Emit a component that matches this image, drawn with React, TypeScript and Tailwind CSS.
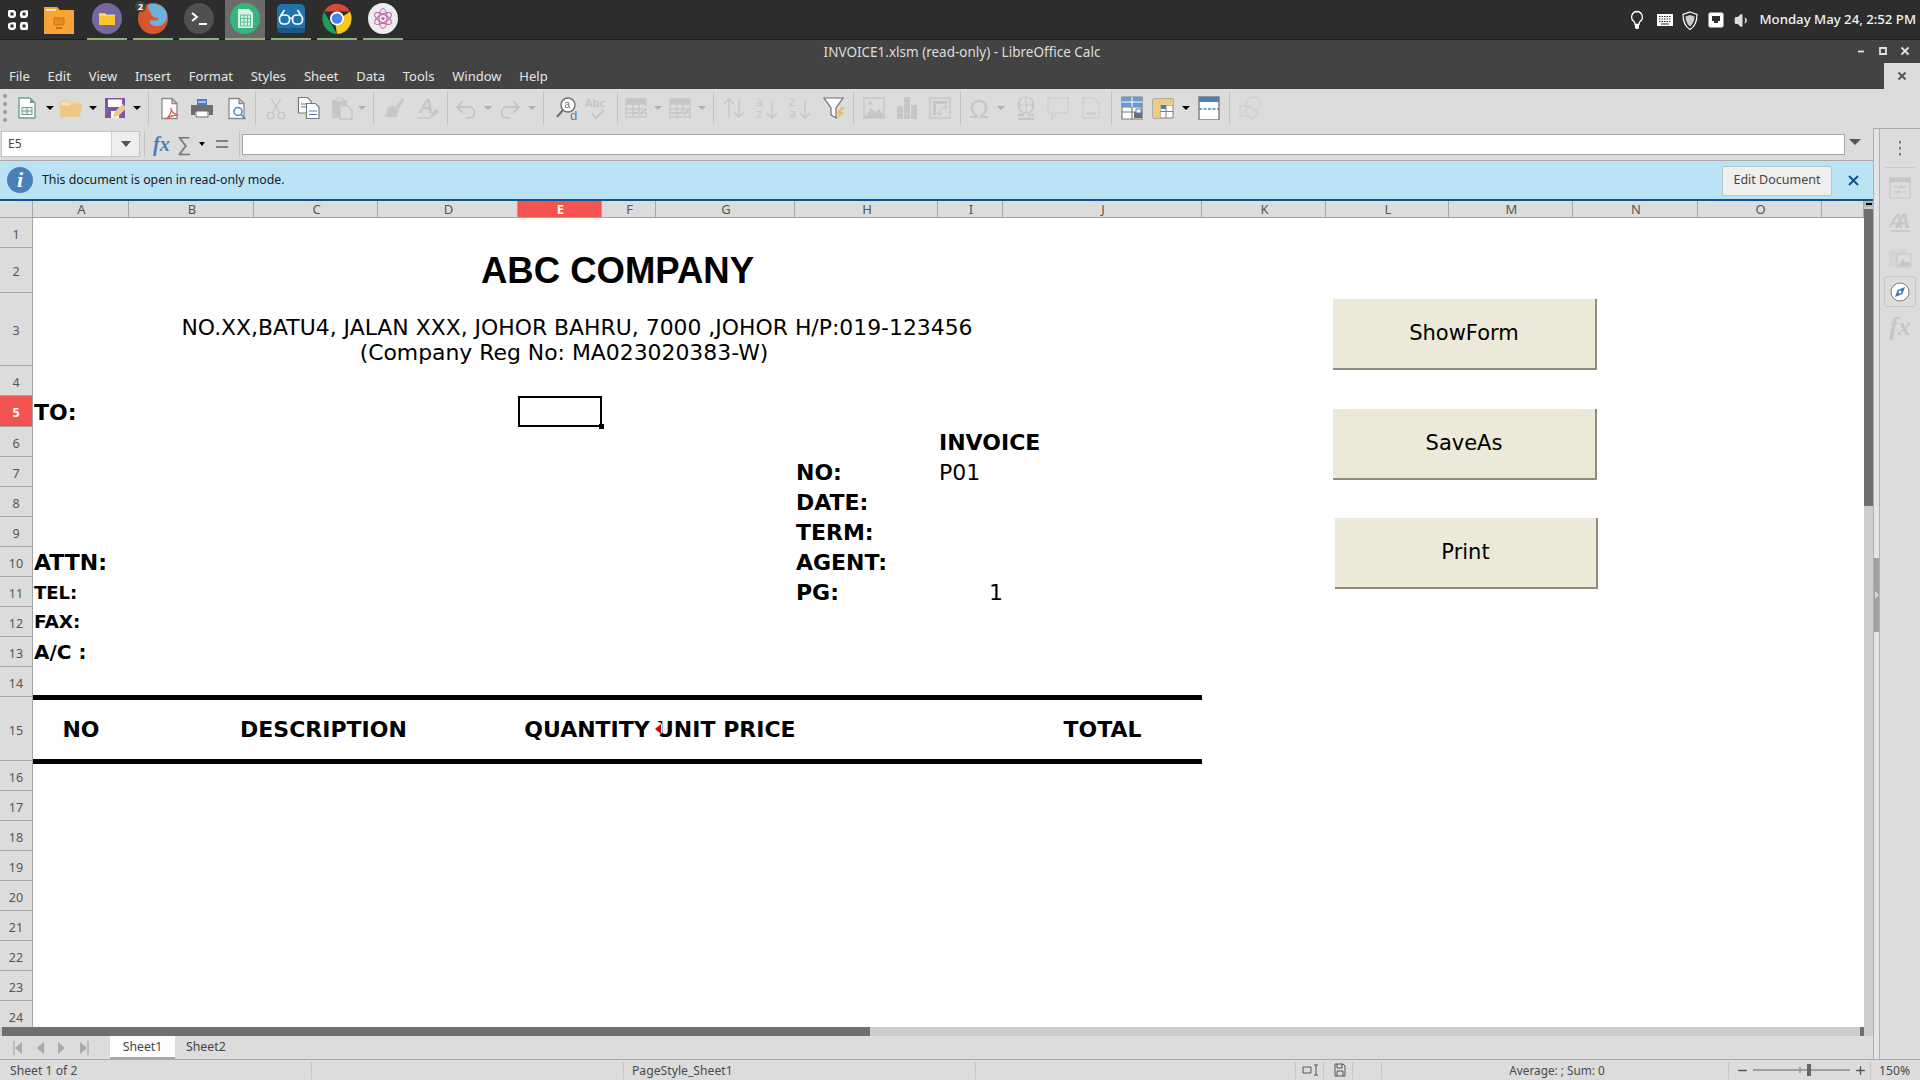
import type { ReactNode } from "react";
import { Minus, Plus, Volume1 } from "lucide-react";

const UI = "font-['Noto_Sans',sans-serif]";
const OFF = "#c6c6c6";

const columns = [
  ["A", 96], ["B", 125], ["C", 124], ["D", 140], ["E", 84], ["F", 54], ["G", 139], ["H", 143],
  ["I", 65], ["J", 199], ["K", 124], ["L", 123], ["M", 124], ["N", 125], ["O", 124], ["", 42],
] as const;

function Svg({ children, w = 24, h = 24 }: { children: ReactNode; w?: number; h?: number }) {
  return (
    <svg width={w} height={h} viewBox={`0 0 ${w} ${h}`} fill="none" className="block">
      {children}
    </svg>
  );
}

const Doc = ({ c = "#7f7f7f", f = "#fff" }: { c?: string; f?: string }) => (
  <path d="M5 2.5h10l5 5v15H5z M15 2.5v5h5" stroke={c} strokeWidth="1.3" fill={f} />
);

const GridIcon = ({ c = OFF }: { c?: string }) => (
  <>
    <path d="M2 3h20v18H2z M2 8h20 M2 13h20 M2 17h20 M9 3v18 M15 3v18" stroke={c} strokeWidth="1.3" />
    <path d="M2 3h20v5H2z" fill={c} />
    <path d="M14 21l2-5 6-5 2 2-6 6z" fill={c} stroke="#dcdcdc" />
  </>
);

const tools: { x: number; kind: "icon" | "arrow" | "off" | "sep"; icon?: ReactNode }[] = [
  {
    x: 27, kind: "icon",
    icon: (
      <Svg>
        <path d="M4 2h11l5 5v15H4z" stroke="#6fa08c" strokeWidth="1.4" fill="#fff" />
        <path d="M15 2l5 5h-5z" fill="#6fa08c" />
        <path d="M6.5 11h11v8h-11z" fill="#6fa08c" />
        <path d="M7.5 14.4h4v-2.4h-4z M12.5 14.4h4v-2.4h-4z M7.5 18h4v-2.6h-4z M12.5 18h4v-2.6h-4z" fill="#e8f2ee" />
      </Svg>
    ),
  },
  { x: 50, kind: "arrow" },
  {
    x: 71, kind: "icon",
    icon: (
      <Svg>
        <path d="M1 8l1-3h8l2 2h8v3H1z" fill="#f7dfb0" stroke="#e6c07e" strokeWidth=".8" />
        <path d="M1 21V10h9l2-2h11l-2 13z" fill="#eec784" />
      </Svg>
    ),
  },
  { x: 93, kind: "arrow" },
  {
    x: 115, kind: "icon",
    icon: (
      <Svg>
        <path d="M2 2h20v20H2z" fill="#7e57a7" />
        <path d="M5 3.5h14v7.5H5z" fill="#fff" />
        <path d="M8 15h8v7H8z" fill="#fff" />
        <path d="M10 21.5l1.5-5 8-8 3.5 3.5-8 8z" fill="#f0c77e" stroke="#dcdcdc" strokeWidth=".7" />
      </Svg>
    ),
  },
  { x: 137, kind: "arrow" },
  { x: 148, kind: "sep" },
  {
    x: 169, kind: "icon",
    icon: (
      <Svg>
        <Doc c="#8a8a8a" />
        <path d="M9 23c4-3 6-8 5-11 0 4 3 6 7 7-4 0-8 1-12 4z" stroke="#e0604a" strokeWidth="1.3" fill="#fff" />
      </Svg>
    ),
  },
  {
    x: 202, kind: "icon",
    icon: (
      <Svg>
        <path d="M7 3h10v6H7z" fill="#4a7fb8" />
        <path d="M1 9h22v10h-4v-3H5v3H1z" fill="#6e6e6e" />
        <path d="M6 15h12v6H6z" fill="#fff" stroke="#6e6e6e" />
        <path d="M8 6h8" stroke="#fff" />
      </Svg>
    ),
  },
  {
    x: 236, kind: "icon",
    icon: (
      <Svg>
        <Doc c="#8a8a8a" />
        <circle cx="14" cy="15.5" r="4" stroke="#4a86c0" strokeWidth="1.5" fill="#fff" />
        <path d="M17 18.5l4.5 4.5" stroke="#4a86c0" strokeWidth="1.6" />
      </Svg>
    ),
  },
  { x: 255, kind: "sep" },
  {
    x: 276, kind: "icon",
    icon: (
      <Svg>
        <path d="M7 2l8.5 15M17 2L8.5 17" stroke={OFF} strokeWidth="1.4" />
        <circle cx="6.5" cy="19.5" r="3.2" stroke={OFF} strokeWidth="1.4" />
        <circle cx="17.5" cy="19.5" r="3.2" stroke={OFF} strokeWidth="1.4" />
      </Svg>
    ),
  },
  {
    x: 309, kind: "icon",
    icon: (
      <Svg>
        <path d="M1.5 1.5h9l3.5 3.5v12H1.5z" stroke="#7a7a7a" strokeWidth="1.2" fill="#fff" />
        <path d="M4 8h7M4 11h7" stroke="#4a7fb8" strokeWidth="1.2" />
        <path d="M9.5 7.5h9l3.5 3.5v11.5H9.5z" stroke="#7a7a7a" strokeWidth="1.2" fill="#fff" />
        <path d="M12 15h8M12 18.5h8" stroke="#4a7fb8" strokeWidth="1.2" />
      </Svg>
    ),
  },
  {
    x: 342, kind: "icon",
    icon: (
      <Svg>
        <path d="M2 4h15v18H2z" fill={OFF} />
        <path d="M6 2h7v4H6z" fill="#dcdcdc" stroke={OFF} />
        <path d="M10 10h8l4 4v9H10z" fill="#dcdcdc" stroke={OFF} strokeWidth="1.3" />
      </Svg>
    ),
  },
  { x: 362, kind: "off" },
  { x: 373, kind: "sep" },
  {
    x: 394, kind: "icon",
    icon: (
      <Svg>
        <path d="M14 11L20 2l2 1.5-5 9.5z" fill={OFF} />
        <path d="M5 12l6-3 6 5-3 7H3l2-4z" fill={OFF} />
      </Svg>
    ),
  },
  {
    x: 428, kind: "icon",
    icon: (
      <Svg>
        <text x="3" y="17" fontSize="20" fontStyle="italic" fontWeight="700" fontFamily="Liberation Sans" fill={OFF}>A</text>
        <path d="M1 22h14" stroke={OFF} strokeWidth="1.5" />
        <path d="M14 21l1-3 5-5 2.5 2.500-5 5z" fill={OFF} />
      </Svg>
    ),
  },
  { x: 447, kind: "sep" },
  {
    x: 466, kind: "icon",
    icon: (
      <Svg>
        <path d="M9 5l-6 6 6 6M3 11h12a5.5 5.5 0 0 1 0 11h-3" stroke={OFF} strokeWidth="1.8" />
      </Svg>
    ),
  },
  { x: 488, kind: "off" },
  {
    x: 510, kind: "icon",
    icon: (
      <Svg>
        <path d="M15 5l6 6-6 6M21 11H9a5.5 5.5 0 0 0 0 11h3" stroke={OFF} strokeWidth="1.8" />
      </Svg>
    ),
  },
  { x: 532, kind: "off" },
  { x: 543, kind: "sep" },
  {
    x: 567, kind: "icon",
    icon: (
      <Svg>
        <circle cx="13" cy="9" r="7" stroke="#6e6e6e" strokeWidth="1.4" fill="#fff" />
        <path d="M8 14l-6 7" stroke="#6e6e6e" strokeWidth="2" />
        <text x="9.500" y="12" fontSize="10" fontFamily="Liberation Sans" fill="#6e6e6e">a</text>
        <text x="15" y="24" fontSize="13" fontFamily="Liberation Sans" fill="#4a86c0">d</text>
      </Svg>
    ),
  },
  {
    x: 597, kind: "icon",
    icon: (
      <Svg>
        <text x="0" y="11" fontSize="11" fontWeight="700" fontFamily="Noto Sans" fill={OFF}>Abc</text>
        <path d="M7 17l4 5 8-8" stroke={OFF} strokeWidth="2" />
      </Svg>
    ),
  },
  { x: 617, kind: "sep" },
  { x: 636, kind: "icon", icon: <Svg><GridIcon /></Svg> },
  { x: 658, kind: "off" },
  { x: 680, kind: "icon", icon: <Svg><GridIcon /></Svg> },
  { x: 702, kind: "off" },
  { x: 713, kind: "sep" },
  {
    x: 734, kind: "icon",
    icon: (
      <Svg>
        <path d="M7 22V3M2 8l5-5 5 5M17 2v19M12 16l5 5 5-5" stroke={OFF} strokeWidth="1.3" />
      </Svg>
    ),
  },
  {
    x: 767, kind: "icon",
    icon: (
      <Svg>
        <text x="1" y="10" fontSize="13" fontFamily="Noto Sans" fill={OFF}>a</text>
        <text x="1" y="22" fontSize="13" fontFamily="Noto Sans" fill={OFF}>z</text>
        <path d="M17 5v17M12 17l5 5 5-5" stroke={OFF} strokeWidth="1.3" />
      </Svg>
    ),
  },
  {
    x: 800, kind: "icon",
    icon: (
      <Svg>
        <text x="1" y="10" fontSize="13" fontFamily="Noto Sans" fill={OFF}>z</text>
        <text x="1" y="22" fontSize="13" fontFamily="Noto Sans" fill={OFF}>a</text>
        <path d="M17 5v17M12 17l5 5 5-5" stroke={OFF} strokeWidth="1.3" />
      </Svg>
    ),
  },
  {
    x: 834, kind: "icon",
    icon: (
      <Svg>
        <path d="M2 2h19l-7 10v10l-5-3v-7z" fill="#fff" stroke="#6e6e6e" strokeWidth="1.2" />
        <path d="M19 11h4l-4 5h3l-7 8 2-6h-3z" fill="#f0bd62" />
      </Svg>
    ),
  },
  { x: 853, kind: "sep" },
  {
    x: 874, kind: "icon",
    icon: (
      <Svg>
        <path d="M2 2h20v20H2z" stroke={OFF} strokeWidth="1.4" />
        <path d="M2 22l7-10 4 5 4-4 5 6v3z" fill={OFF} />
        <circle cx="8" cy="7" r="2" fill={OFF} />
      </Svg>
    ),
  },
  {
    x: 906, kind: "icon",
    icon: (
      <Svg>
        <path d="M3 10h6v13H3z M10 1h6v22h-6z M17 9h6v14h-6z" fill={OFF} />
      </Svg>
    ),
  },
  {
    x: 940, kind: "icon",
    icon: (
      <Svg>
        <path d="M2 2h20v20H2z" stroke={OFF} strokeWidth="1.4" />
        <path d="M5 5h14v3H5z M5 5h3v14H5z" fill={OFF} />
        <path d="M11 19c0-5 3-8 8-8M16 9l3 2-2 3M9 16l2 3 3-2" stroke={OFF} strokeWidth="1.1" />
      </Svg>
    ),
  },
  { x: 960, kind: "sep" },
  {
    x: 979, kind: "icon",
    icon: (
      <Svg>
        <text x="12" y="22" textAnchor="middle" fontSize="26" fontFamily="Liberation Sans" fill={OFF}>Ω</text>
      </Svg>
    ),
  },
  { x: 1001, kind: "off" },
  {
    x: 1026, kind: "icon",
    icon: (
      <Svg>
        <circle cx="12" cy="9" r="8" stroke={OFF} strokeWidth="1.2" />
        <path d="M4 9h16 M12 1v16 M7 2c-2 4-2 10 0 14 M17 2c2 4 2 10 0 14" stroke={OFF} />
        <path d="M4 19h6M14 19h6M4 23h16" stroke={OFF} strokeWidth="2.5" />
      </Svg>
    ),
  },
  {
    x: 1058, kind: "icon",
    icon: (
      <Svg>
        <path d="M2 2h20v15H10l-4 6v-6H2z" stroke="#cfcfcf" strokeWidth="1.5" />
      </Svg>
    ),
  },
  {
    x: 1091, kind: "icon",
    icon: (
      <Svg>
        <path d="M4 2h11l5 5v15H4z" stroke="#cfcfcf" strokeWidth="1.4" />
        <path d="M7 16h10v3H7z" fill="#cfcfcf" />
      </Svg>
    ),
  },
  { x: 1111, kind: "sep" },
  {
    x: 1132, kind: "icon",
    icon: (
      <Svg>
        <path d="M2 1h20v22H2z M2 11h20 M2 16h20 M12 1v22" stroke="#7a7a7a" strokeWidth="1.2" fill="#fff" />
        <path d="M2 1h20v10H2z" fill="#6d9bcc" />
        <path d="M2 6h20M12 1v10" stroke="#fff" />
        <path d="M14 16h8v6h-8z" fill="#6e6e6e" />
        <path d="M16 13h5v4h-5z" fill="#fff" stroke="#4a7fb8" />
      </Svg>
    ),
  },
  {
    x: 1163, kind: "icon",
    icon: (
      <Svg>
        <path d="M2 3h20v19H2z M2 9h20 M2 15.5h20 M9 3v19 M15 3v19" stroke="#7f7f7f" strokeWidth="1" fill="#fff" />
        <path d="M2 3h7v19H2z M9 3h13v6H9z" fill="#efc986" />
        <path d="M10 9h5v4h-5z" fill="#4a7fb8" />
      </Svg>
    ),
  },
  { x: 1186, kind: "arrow" },
  {
    x: 1209, kind: "icon",
    icon: (
      <Svg>
        <path d="M2 1h20v23H2z" stroke="#7a7a7a" strokeWidth="1.4" fill="#fff" />
        <path d="M2 1h20v5H2z" fill="#4a7fb8" />
        <path d="M2 13h20" stroke="#4a86c0" strokeWidth="1.3" strokeDasharray="3 1.5" />
      </Svg>
    ),
  },
  { x: 1229, kind: "sep" },
  {
    x: 1250, kind: "icon",
    icon: (
      <Svg>
        <circle cx="15" cy="8" r="7" stroke="#cfcfcf" strokeWidth="1.3" />
        <path d="M2 10h9v10H2z" stroke="#cfcfcf" strokeWidth="1.3" />
        <path d="M12 10l8 7-6 6-7-7z" fill="#dcdcdc" stroke="#cfcfcf" strokeWidth="1.3" />
      </Svg>
    ),
  },
];

function Toolbar() {
  let end = 0;
  return (
    <div className="h-[39px] bg-[#dcdcdc] flex items-center pb-[1px] shrink-0">
      <div className="absolute left-[3px] w-[4px] h-[28px] border-l-4 border-dotted border-[#9a9a9a]" />
      {tools.map((t, i) => {
        const w = t.kind === "icon" ? 24 : t.kind === "sep" ? 1 : 8;
        const gap = t.x - w / 2 - end;
        end = t.x + w / 2;
        if (t.kind === "sep") {
          return <div key={i} style={{ marginLeft: gap }} className="w-px h-8 bg-[#c2c2c2]" />;
        }
        if (t.kind === "icon") {
          return <div key={i} style={{ marginLeft: gap }} className="w-6 h-6">{t.icon}</div>;
        }
        return (
          <div
            key={i}
            style={{ marginLeft: gap }}
            className={`w-0 h-0 border-x-4 border-x-transparent border-t-[4px] ${t.kind === "arrow" ? "border-t-black" : "border-t-[#b0b0b0]"}`}
          />
        );
      })}
    </div>
  );
}

function DockItem({ active, children }: { active?: boolean; children: ReactNode }) {
  return (
    <div className={`w-10 h-10 flex items-center justify-center pb-[2px] border-b-2 border-[#8fb377] relative ${active ? "bg-[#6b6b6b]" : ""}`}>
      {children}
    </div>
  );
}

function TopPanel() {
  return (
    <div className="h-10 bg-[#2d2d2d] flex items-start shrink-0 border-b border-[#1d1d1d] text-white">
      <div className="w-[32px] ml-[2px] h-10 flex items-center justify-center">
        <Svg w={24} h={24}>
          <path d="M3 2h5l2 2v4l-2 2H4L2 8V3z M15 3l6-1 1 1v5l-2 2h-5l-1-2V5z M3 15l5-1 2 1v5l-2 2H4l-2-2v-4z M15 14h6l1 2v5l-1 1h-6l-1-2v-4z" fill="#fff" />
          <path d="M4.500 4.500h3v3h-3z M16.500 4.500h3v3h-3z M4.500 16.500h3v3h-3z M16.500 16.500h3v3h-3z" fill="#2d2d2d" />
        </Svg>
      </div>
      <div className="w-[32px] ml-[9px] mt-[6px]">
        <Svg w={32} h={28}>
          <path d="M1 1h13l3 3h14v24H1z" fill="#f8a434" />
          <path d="M3 4h10" stroke="#fff" strokeWidth="1.6" />
          <path d="M11 12h10v7H11z" fill="#e88b1d" stroke="#c96f12" />
          <path d="M13 21h6v2h-6z" fill="#c96f12" />
        </Svg>
      </div>
      <div className="ml-[12px] flex gap-[6px]">
        <DockItem>
          <Svg w={30} h={31}>
            <ellipse cx="15" cy="15.5" rx="15" ry="15.5" fill="#76689f" />
            <path d="M7 10h6l2 2h8v10H7z" fill="#fbc52d" />
            <path d="M7 12h16" stroke="#fff" strokeWidth=".6" />
          </Svg>
        </DockItem>
        <DockItem>
          <Svg w={30} h={31}>
            <ellipse cx="15" cy="15.5" rx="15" ry="15.5" fill="#d9562a" />
            <path d="M10 2c9-4 20 3 19 12-1 6-6 10-11 9-4 0-7-3-6-6 3 1 8 1 9-2-3 0-8-1-8-5-2-2-3-5-3-8z" fill="#6cb2de" />
          </Svg>
          <span className="absolute left-[2px] top-[1px] w-[11px] h-[11px] rounded-full bg-[#444] text-[9px] leading-[11px] text-center font-bold font-['Noto_Sans',sans-serif]">2</span>
        </DockItem>
        <DockItem>
          <Svg w={30} h={31}>
            <ellipse cx="15" cy="15.5" rx="15" ry="15.5" fill="#505050" />
            <path d="M8 10l5 4-5 4" stroke="#fff" strokeWidth="2" />
            <path d="M15 21h8" stroke="#fff" strokeWidth="2" />
          </Svg>
        </DockItem>
        <DockItem active>
          <Svg w={30} h={31}>
            <ellipse cx="15" cy="15.5" rx="15" ry="15.5" fill="#35b57b" />
            <path d="M8 6h11l4 4v15H8z" fill="#d9efe3" />
            <path d="M10.5 12h10v11h-10z M10.5 15.5h10 M10.5 19h10 M14 12v11 M17.5 12v11" stroke="#5fbf93" />
          </Svg>
        </DockItem>
        <DockItem>
          <Svg w={30} h={31}>
            <rect x="1" y="1" width="28" height="29" rx="5" fill="#1f74ad" />
            <path d="M1 25h28v1a4 4 0 0 1-4 4H5a4 4 0 0 1-4-4z" fill="#175a87" />
            <rect x="3.500" y="12" width="10" height="9" rx="4" stroke="#fff" strokeWidth="1.7" />
            <rect x="16.500" y="12" width="10" height="9" rx="4" stroke="#fff" strokeWidth="1.7" />
            <path d="M13.500 15h3M4.500 13l4-6M25.500 13l-4-6" stroke="#fff" strokeWidth="1.7" />
          </Svg>
        </DockItem>
        <DockItem>
          <Svg w={30} h={31}>
            <path d="M2 8.500A15 15.500 0 0 1 28 8.500H15z" fill="#d8473c" />
            <path d="M28 8.500A15 15.500 0 0 1 15 31l-2-12z" fill="#f6c71c" />
            <path d="M15 31A15 15.500 0 0 1 2 8.500l7 12z" fill="#1e9f57" />
            <circle cx="15" cy="15.5" r="7" fill="#fff" />
            <circle cx="15" cy="15.5" r="5.300" fill="#4a84e8" />
          </Svg>
        </DockItem>
        <DockItem>
          <Svg w={30} h={31}>
            <ellipse cx="15" cy="15.5" rx="15" ry="15.5" fill="#ededed" />
            <ellipse cx="15" cy="15.5" rx="9.500" ry="4" stroke="#c060a8" transform="rotate(30 15 15.500)" />
            <ellipse cx="15" cy="15.5" rx="9.500" ry="4" stroke="#c060a8" transform="rotate(-30 15 15.500)" />
            <ellipse cx="15" cy="15.5" rx="4" ry="10" stroke="#c060a8" />
            <circle cx="15" cy="15.5" r="1.600" fill="#c060a8" />
          </Svg>
        </DockItem>
      </div>
      <div className="ml-auto h-10 flex items-center pr-[4px]">
        <Svg w={16} h={20}>
          <path d="M8 1.500a5.500 5.500 0 0 0-3 10c1 1 1 2 1 3h4c0-1 0-2 1-3a5.500 5.500 0 0 0-3-10z" stroke="#fff" strokeWidth="1.3" />
          <path d="M6 15h4v3l-1 1H7l-1-1z" fill="#fff" />
        </Svg>
        <div className="ml-[11px]">
          <Svg w={18} h={14}>
            <path d="M1 1h16v12H1z" fill="#fff" />
            <path d="M3 3.500h12M3 6h12M3 8.500h12" stroke="#2d2d2d" strokeWidth="1.100" strokeDasharray="1.500 1" />
            <path d="M5 11h8" stroke="#2d2d2d" />
          </Svg>
        </div>
        <div className="ml-[8px]">
          <Svg w={16} h={19}>
            <path d="M8 1l7 2.500c0 7-2 12-7 15-5-3-7-8-7-15z" stroke="#fff" strokeWidth="1.200" />
            <path d="M8 4l4.500 1.500c0 4-1.500 7.500-4.500 10-3-2.500-4.500-6-4.500-10z" fill="#ccc" />
          </Svg>
        </div>
        <div className="ml-[10px]">
          <Svg w={16} h={16}>
            <rect x="0.500" y="0.500" width="15" height="15" rx="2" fill="#fff" />
            <path d="M4 4h8v5h-2v2H6V9H4z" fill="#2d2d2d" />
          </Svg>
        </div>
        <Volume1 size={17} className="ml-[10px] text-[#ddd]" fill="#ddd" />
        <span className={`${UI} ml-[9px] text-[13.200px] font-medium text-[#f2f2f2] whitespace-nowrap`}>Monday May 24, 2:52 PM</span>
      </div>
    </div>
  );
}

const menus = ["File", "Edit", "View", "Insert", "Format", "Styles", "Sheet", "Data", "Tools", "Window", "Help"];

function WindowChrome() {
  return (
    <div className={`h-[49px] bg-[#434343] shrink-0 flex flex-col text-[#e6e6e6] ${UI}`}>
      <div className="h-[23px] relative flex items-center justify-center pt-[2px] pl-[4px] text-[13.500px] text-[#dedede]">
        INVOICE1.xlsm (read-only) - LibreOffice Calc
        <div className="absolute right-[10px] top-[6px] flex gap-[12px] items-center">
          <Svg w={10} h={10}><path d="M2 5.500h6" stroke="#e0e0e0" strokeWidth="1.800" /></Svg>
          <Svg w={10} h={10}><path d="M2 2h6v6H2z" stroke="#e0e0e0" strokeWidth="1.800" /></Svg>
          <Svg w={10} h={10}><path d="M1.500 1.500l7 7M8.500 1.500l-7 7" stroke="#e0e0e0" strokeWidth="1.800" /></Svg>
        </div>
      </div>
      <div className="h-[26px] flex items-center">
        <div className="flex gap-[17.800px] pl-[9px] pt-[2px] text-[13px]">
          {menus.map((m) => (
            <span key={m}>{m}</span>
          ))}
        </div>
        <div className="ml-auto w-9 h-full bg-[#dcdcdc] flex items-center justify-center">
          <Svg w={10} h={10}><path d="M1.500 1.500l7 7M8.500 1.500l-7 7" stroke="#505050" strokeWidth="1.800" /></Svg>
        </div>
      </div>
    </div>
  );
}

function FormulaBar() {
  return (
    <div className={`h-[33px] bg-[#dcdcdc] flex items-center shrink-0 border-b border-[#a9a9a9] ${UI}`}>
      <div className="ml-px w-[139px] h-[26px] flex border border-[#c4c4c4] bg-white text-[12px] text-[#444]">
        <span className="flex-1 pl-[6px] leading-[24px]">E5</span>
        <span className="w-[28px] bg-[#eeeeee] border-l border-[#d0d0d0] flex items-center justify-center">
          <span className="w-0 h-0 border-x-[5px] border-x-transparent border-t-[6px] border-t-[#555]" />
        </span>
      </div>
      <div className="ml-[4px] w-px h-[26px] bg-[#c2c2c2]" />
      <span className="ml-[8px] w-[22px] text-[#4a7fb8] font-['Liberation_Serif',serif] italic font-bold text-[20px] leading-none">fx</span>
      <span className="ml-[2px] w-[14px] text-[#777] font-['Liberation_Sans',sans-serif] text-[20px] leading-none">∑</span>
      <span className="ml-[8px] w-0 h-0 border-x-[3.500px] border-x-transparent border-t-[4px] border-t-black" />
      <span className="ml-[11px] w-[12px] h-[8px] border-y-2 border-[#808080]" />
      <div className="ml-[11px] w-px h-[26px] bg-[#c2c2c2]" />
      <div className="ml-[2px] w-[1603px] h-[21px] bg-white border border-[#a6a6a6]" />
      <span className="ml-[4px] w-0 h-0 border-x-[6px] border-x-transparent border-t-[6px] border-t-[#555] mb-[5px]" />
    </div>
  );
}

function InfoBar() {
  return (
    <div className={`h-[40px] bg-[#bae3f6] flex items-center shrink-0 border-b-2 border-[#0e5394] ${UI}`}>
      <div className="ml-[7px] w-[26px] h-[26px] rounded-full bg-[#4a7fb8] text-white text-center font-['Liberation_Serif',serif] italic font-bold text-[22px] leading-[26px]">i</div>
      <span className="ml-[9px] text-[12.300px] text-[#1a1a1a]">This document is open in read-only mode.</span>
      <button className="ml-auto mt-[1px] w-[110px] h-[30px] bg-[#efefef] border border-[#b9c6cc] rounded-[2px] text-[12.500px] text-[#444]">Edit Document</button>
      <div className="ml-[16px] mr-[14px]">
        <Svg w={11} h={11}><path d="M1 1l9 9M10 1l-9 9" stroke="#0e5394" strokeWidth="2" /></Svg>
      </div>
    </div>
  );
}

const bodyText = "font-['DejaVu_Sans',sans-serif] text-[22px] text-black whitespace-nowrap";
const boldCell = `${bodyText} font-bold self-center pl-px`;
const headCell = `${bodyText} font-bold self-center text-center`;
const smallBold = "font-['DejaVu_Sans',sans-serif] font-bold text-black whitespace-nowrap self-center pl-px";

function ActionButton({ label, className }: { label: string; className: string }) {
  return (
    <button className={`absolute h-[71px] pt-[1px] bg-[#ece9d8] border-r-2 border-b-2 border-[#8e8c7c] font-['DejaVu_Sans',sans-serif] text-[21px] text-black ${className}`}>
      {label}
    </button>
  );
}

const rowNumbers = Array.from({ length: 24 }, (_, i) => i + 1);

function Sheet() {
  return (
    <div className="h-[826px] relative overflow-hidden bg-white shrink-0">
      <div className="grid grid-cols-[33px_96px_125px_124px_140px_84px_54px_139px_143px_65px_199px_124px_123px_124px_125px_124px_42px] grid-rows-[17px_30px_45px_73px_30px_31px_30px_30px_30px_30px_30px_30px_30px_30px_30px_64px_30px_30px_30px_30px_30px_30px_30px_30px_30px]">
        <div className="bg-[#dcdcdc] border-b border-r border-[#a5a5a5]" />
        {columns.map(([name]) => (
          <div
            key={name}
            className={`${UI} text-[13px] leading-[16px] text-center pl-[2px] border-b border-r border-[#a5a5a5] ${name === "E" ? "bg-[#f25550] text-white font-bold" : "bg-[#dcdcdc] text-[#555]"}`}
          >
            {name}
          </div>
        ))}
        {rowNumbers.map((n) => (
          <div
            key={n}
            className={`col-start-1 ${UI} text-[12.500px] flex items-center justify-center pt-[5px] border-b border-r border-[#a5a5a5] ${n === 5 ? "bg-[#f25550] text-white font-bold" : "bg-[#dcdcdc] text-[#555]"}`}
          >
            {n}
          </div>
        ))}

        <div className="col-start-2 col-span-10 row-start-3 self-center text-center pt-[2px] font-['Liberation_Sans',sans-serif] font-bold text-[36.500px] text-black">ABC COMPANY</div>
        <div className="col-start-3 col-span-8 row-start-4 self-end mb-[1px] text-center font-['DejaVu_Sans',sans-serif] text-[21.900px] leading-[25px] text-black whitespace-nowrap">
          <div className="pl-[22px]">NO.XX,BATU4, JALAN XXX, JOHOR BAHRU, 7000 ,JOHOR H/P:019-123456</div>
          <div className="pr-[4px]">(Company Reg No: MA023020383-W)</div>
        </div>

        <div className={`col-start-2 row-start-6 pt-[2px] ${boldCell}`}>TO:</div>
        <div className="col-start-6 row-start-6 border-2 border-black relative">
          <span className="absolute right-[-4px] bottom-[-4px] w-[5px] h-[5px] bg-black" />
        </div>
        <div className={`col-start-10 row-start-7 ${boldCell}`}>INVOICE</div>
        <div className={`col-start-9 row-start-8 ${boldCell}`}>NO:</div>
        <div className={`col-start-10 row-start-8 self-center pl-px ${bodyText}`}>P01</div>
        <div className={`col-start-9 row-start-9 ${boldCell}`}>DATE:</div>
        <div className={`col-start-9 row-start-10 ${boldCell}`}>TERM:</div>
        <div className={`col-start-2 row-start-11 ${boldCell}`}>ATTN:</div>
        <div className={`col-start-9 row-start-11 ${boldCell}`}>AGENT:</div>
        <div className={`col-start-2 row-start-12 text-[18px] ${smallBold}`}>TEL:</div>
        <div className={`col-start-9 row-start-12 ${boldCell}`}>PG:</div>
        <div className={`col-start-10 row-start-12 self-center text-right ${bodyText}`}>1</div>
        <div className={`col-start-2 row-start-13 text-[18.500px] ${smallBold}`}>FAX:</div>
        <div className={`col-start-2 row-start-14 text-[20px] ${smallBold}`}>A/C :</div>

        <div className={`col-start-2 row-start-16 ${headCell}`}>NO</div>
        <div className={`col-start-3 col-span-3 row-start-16 ${headCell}`}>DESCRIPTION</div>
        <div className={`col-start-6 col-span-2 row-start-16 ${headCell}`}>QUANTITY</div>
        <div className={`col-start-8 row-start-16 ${headCell}`}>UNIT PRICE</div>
        <div className={`col-start-11 row-start-16 ${headCell}`}>TOTAL</div>
        <div className="col-start-2 col-span-10 row-start-16 border-y-[5px] border-black -mt-[2px] mb-[-3px]" />
      </div>

      <span className="absolute left-[654px] top-[521px] w-[8px] h-[13px] bg-white rounded-full" />
      <span className="absolute left-[655px] top-[523px] w-0 h-0 border-y-[5px] border-y-transparent border-r-[6px] border-r-[#e00000]" />

      <ActionButton label="ShowForm" className="left-[1333px] top-[98px] w-[264px]" />
      <ActionButton label="SaveAs" className="left-[1333px] top-[208px] w-[264px]" />
      <ActionButton label="Print" className="left-[1335px] top-[317px] w-[263px]" />
    </div>
  );
}

function VScroll() {
  return (
    <div className="w-[9px] bg-[#cdcdcd] shrink-0 flex flex-col">
      <div className="h-[6px] bg-[#b4b4b4] flex items-center justify-center">
        <span className="w-[6px] h-[2px] bg-black" />
      </div>
      <div className="mt-[2px] h-[297px] bg-[#6f6f6f]" />
    </div>
  );
}

const NavTri = ({ dir, bar }: { dir: "l" | "r"; bar?: boolean }) => (
  <Svg w={12} h={16}>
    {dir === "l" ? <path d="M10 2v12L3 8z" fill="#a8a8a8" /> : <path d="M2 2v12l7-6z" fill="#a8a8a8" />}
    {bar && <path d={dir === "l" ? "M2 1v14" : "M10 1v14"} stroke="#a8a8a8" strokeWidth="1.200" />}
  </Svg>
);

function SheetTabs() {
  return (
    <div className={`h-[24px] bg-[#dcdcdc] flex shrink-0 ${UI} text-[12.300px] text-[#444]`}>
      <div className="w-[110px] flex items-center pl-[12px] gap-[10px]">
        <NavTri dir="l" bar />
        <NavTri dir="l" />
        <NavTri dir="r" />
        <NavTri dir="r" bar />
      </div>
      <div className="w-[65px] bg-white border-b-[3px] border-[#a5a5a5] text-center leading-[22px]">Sheet1</div>
      <div className="ml-[11px] leading-[22px]">Sheet2</div>
    </div>
  );
}

function StatusBar() {
  const cell = "h-[17px] border-r border-[#c6c6c6] shrink-0 flex items-center";
  return (
    <div className={`h-[21px] bg-[#dcdcdc] border-t border-[#a9a9a9] flex items-center shrink-0 ${UI} text-[12.200px] text-[#4a4a4a]`}>
      <div className={`${cell} w-[312px] pl-[10px] pt-[2px]`}>Sheet 1 of 2</div>
      <div className={`${cell} w-[312px]`} />
      <div className={`${cell} w-[352px] pl-[8px] pt-[2px]`}>PageStyle_Sheet1</div>
      <div className={`${cell} w-[320px]`} />
      <div className={`${cell} w-[28px] justify-center pl-[2px]`}>
        <Svg w={18} h={14}>
          <path d="M1 4h8v6H1z" stroke="#555" />
          <path d="M12 2h4M12 12h4M14 2v10" stroke="#555" />
        </Svg>
      </div>
      <div className={`${cell} w-[29px] justify-center pl-[3px]`}>
        <Svg w={12} h={14}>
          <path d="M1 1h8l2 2v10H1z M3 1v4h5V1 M3 13V8h6v5" stroke="#555" />
        </Svg>
      </div>
      <div className={`${cell} w-[29px]`} />
      <div className={`${cell} w-[347px] justify-center pl-[4px] pt-[2px] text-[11.800px]`}>Average: ; Sum: 0</div>
      <div className={`${cell} w-[142px] relative`}>
        <Minus size={13} strokeWidth={2.500} className="absolute left-[7px] text-[#555]" />
        <div className="absolute left-[24px] w-[97px] h-[2px] bg-[#a0a0a0]" />
        <div className="absolute left-[70px] w-[2px] h-[6px] bg-[#a0a0a0]" />
        <div className="absolute left-[78px] w-[4px] h-[12px] bg-[#666]" />
        <Plus size={13} strokeWidth={2.500} className="absolute left-[125px] text-[#555]" />
      </div>
      <div className="pl-[8px] pt-[2px]">150%</div>
    </div>
  );
}

function SidebarIcons() {
  return (
    <div className="flex-1 flex flex-col items-center pt-[12px]">
      <Svg w={4} h={15}><path d="M2 0v2.500M2 6v2.500M2 12v2.500" stroke="#7a7a7a" strokeWidth="2" /></Svg>
      <div className="w-[30px] h-px bg-[#c8c8c8] mt-[11px]" />
      <div className="mt-[9px]">
        <Svg w={22} h={22}>
          <path d="M1 1h20v20H1z" stroke={OFF} strokeWidth="1.200" />
          <path d="M1 1h20v4H1z" fill={OFF} />
          <path d="M5 10h12M5 15h12" stroke={OFF} />
          <path d="M12 8v4M9 13v4" stroke={OFF} strokeWidth="1.400" />
        </Svg>
      </div>
      <div className="mt-[12px]">
        <Svg w={22} h={21}>
          <text x="0" y="17" fontSize="21" fontStyle="italic" fontFamily="Liberation Sans" fill={OFF}>A</text>
          <text x="6" y="17" fontSize="21" fontStyle="italic" fontWeight="700" fontFamily="Liberation Sans" fill={OFF}>A</text>
          <path d="M2 20h19" stroke={OFF} strokeWidth="1.500" />
        </Svg>
      </div>
      <div className="mt-[13px]">
        <Svg w={24} h={24}>
          <path d="M1 5h8l2 2v-3h8v3h1v15H1z" fill="#d4d4d4" />
          <path d="M9 9h14v13H9z" fill="#dcdcdc" stroke={OFF} />
          <path d="M10 21l5-7 3 4 2-2 3 5z" fill={OFF} />
        </Svg>
      </div>
      <div className="mt-[7px] w-[32px] h-[31px] border border-[#c6c6c6] rounded-[3px] flex items-center justify-center">
        <Svg w={20} h={20}>
          <circle cx="10" cy="10" r="9" fill="#fff" stroke="#7a7a7a" />
          <path d="M15 5l-2.500 7L5 15l2.500-7z" fill="#3f78bd" />
          <circle cx="10" cy="10" r="1.500" fill="#fff" />
        </Svg>
      </div>
      <div className="mt-[6px] font-['Liberation_Serif',serif] italic font-bold text-[26px] leading-[28px] text-[#c6c6c6]">fx</div>
    </div>
  );
}

export default function App() {
  return (
    <div className="w-[1920px] h-[1080px] overflow-hidden flex flex-col bg-[#dcdcdc]">
      <TopPanel />
      <WindowChrome />
      <Toolbar />
      <div className="flex flex-1 min-h-0">
        <div className="w-[1873px] shrink-0 flex flex-col">
          <FormulaBar />
          <InfoBar />
          <div className="flex shrink-0">
            <div className="w-[1864px] shrink-0"><Sheet /></div>
            <VScroll />
          </div>
          <div className="h-[9px] bg-[#cdcdcd] shrink-0 flex items-center">
            <div className="ml-[2px] w-[868px] h-full bg-[#6f6f6f]" />
            <div className="ml-auto mr-[9px] w-[4px] h-full bg-[#6f6f6f]" />
          </div>
          <SheetTabs />
        </div>
        <div className="w-[47px] shrink-0 flex border-t border-[#a9a9a9]">
          <div className="w-[7px] border-x border-[#b0b0b0] bg-[#e4e4e4] flex flex-col shrink-0">
            <div className="h-[429px]" />
            <div className="h-[74px] bg-[#a0a0a0] flex items-center justify-center">
              <span className="w-0 h-0 border-y-[4px] border-y-transparent border-l-[4px] border-l-[#d8d8d8]" />
            </div>
          </div>
          <SidebarIcons />
        </div>
      </div>
      <StatusBar />
    </div>
  );
}
